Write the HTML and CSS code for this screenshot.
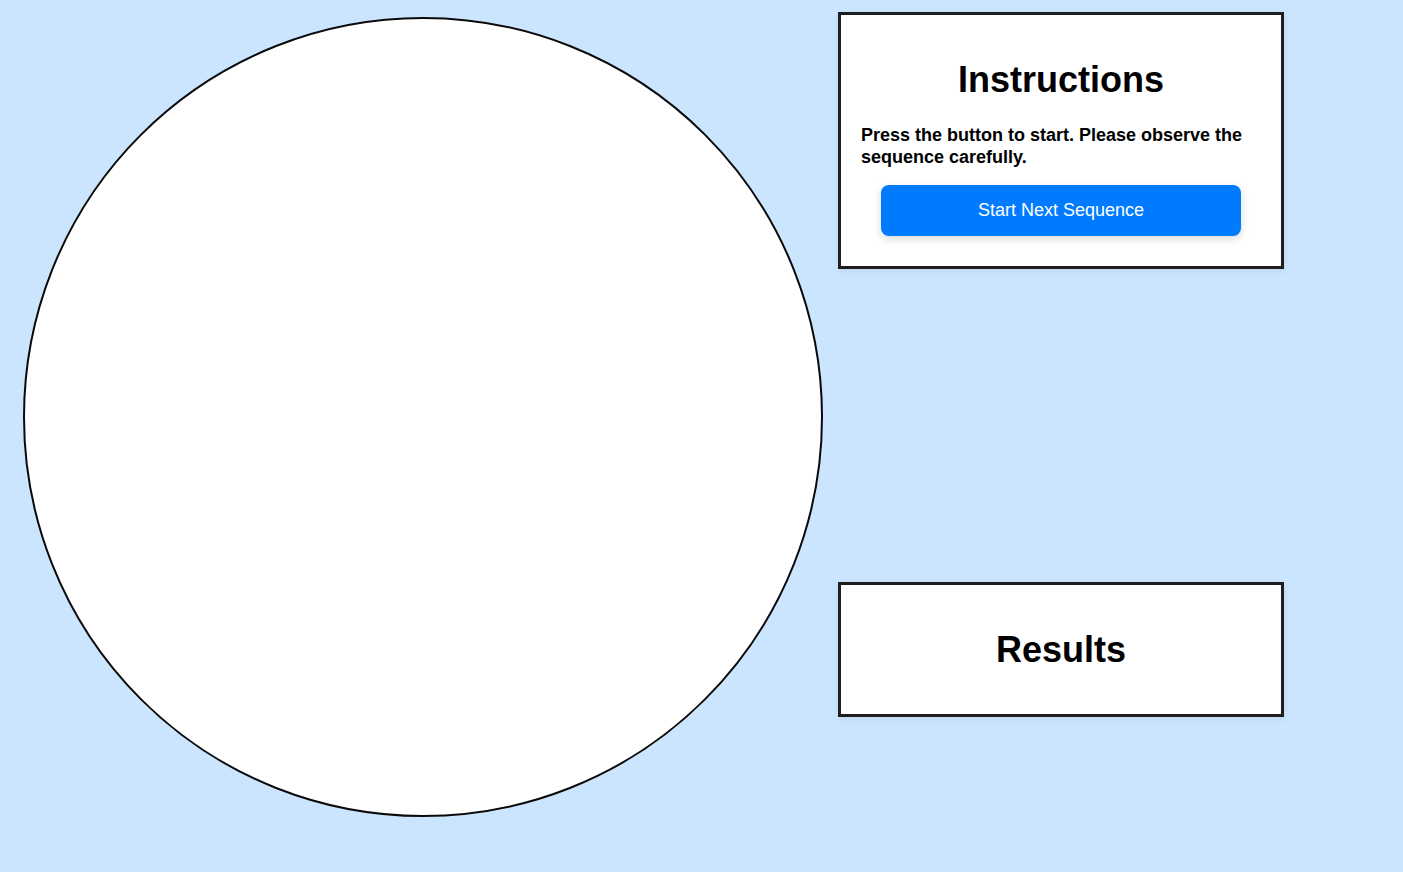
FILE: index.html
```html
<!DOCTYPE html>
<html lang="en">
<head>
<meta charset="utf-8">
<title>Sequence</title>
<link rel="stylesheet" href="styles.css">
</head>
<body>
<main class="layout">
  <div class="circle"></div>
  <aside class="side">
    <section class="panel panel-instructions">
      <h1 class="panel-title">Instructions</h1>
      <p class="panel-text">Press the button to start. Please observe the sequence carefully.</p>
      <button class="start-btn" type="button">Start Next Sequence</button>
    </section>
    <section class="panel panel-results">
      <h1 class="panel-title">Results</h1>
    </section>
  </aside>
</main>
</body>
</html>
```
FILE: styles.css
```css
html, body {
  margin: 0;
  padding: 0;
}
body {
  background: #cce5ff;
  font-family: "Liberation Sans", Arial, sans-serif;
  color: #000;
  height: 872px;
  overflow: hidden;
}
.layout {
  display: flex;
  align-items: flex-start;
  gap: 15px;
  padding: 12px 0 0 23px;
}
.circle {
  box-sizing: border-box;
  width: 800px;
  height: 800px;
  margin-top: 5px;
  border: 2px solid #0a0a0a;
  border-radius: 50%;
  background: #fff;
  flex: none;
}
.side {
  display: flex;
  flex-direction: column;
  gap: 313px;
  width: 446px;
}
.panel {
  box-sizing: border-box;
  background: #fff;
  border: 3px solid #1e1e1e;
  padding: 20px;
  box-shadow: 0 2px 6px rgba(0, 0, 0, 0.08);
  display: flex;
  flex-direction: column;
  align-items: center;
}
.panel-title {
  font-size: 36px;
  font-weight: 700;
  line-height: 40px;
  margin: 25px 0 0;
  text-align: center;
}
.panel-text {
  align-self: stretch;
  font-size: 18px;
  font-weight: 700;
  line-height: 22px;
  margin: 24px 0 0;
}
.start-btn {
  width: 360px;
  height: 51px;
  margin: 17px 0 10px;
  border: none;
  border-radius: 8px;
  background: #007bff;
  color: #fff;
  font-family: "Liberation Sans", Arial, sans-serif;
  font-size: 18px;
  box-shadow: 0 3px 8px rgba(0, 0, 0, 0.15);
  cursor: pointer;
}
.panel-results .panel-title {
  margin: 25px 0 24px;
}
```
